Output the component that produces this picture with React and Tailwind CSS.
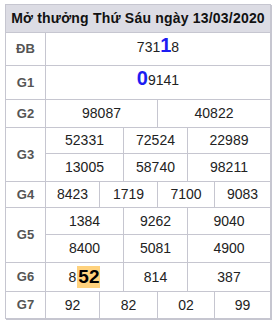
const cell = 'flex items-center justify-center border-r border-b border-[#c6c6d0] text-[14px] text-[#222]'
const label = 'flex items-center justify-center border-r border-b border-[#c6c6d0] text-[13px] font-bold text-[#555]'

function Big({ children }) {
  return <span className="text-[20px] font-bold text-[#1d1df2] leading-none">{children}</span>
}

function Row4({ name, values }) {
  return (
    <>
      <div className={label}>{name}</div>
      <div className={`${cell} col-span-1`}>{values[0]}</div>
      <div className={`${cell} col-span-2`}>{values[1]}</div>
      <div className={`${cell} col-span-2`}>{values[2]}</div>
      <div className={`${cell} col-span-1`}>{values[3]}</div>
    </>
  )
}

function Triple({ values }) {
  return values.map((v, i) => (
    <div key={i} className={`${cell} col-span-2`}>
      {v}
    </div>
  ))
}

export default function App() {
  return (
    <div className="pt-[4px] pl-[5px] bg-white min-h-screen" style={{ fontFamily: '"Liberation Sans", Arial, sans-serif' }}>
      <div className="grid w-fit grid-cols-[40px_54px_24px_34px_30px_27px_56px] grid-rows-[28px_33px_34px_28px_26px_28px_26px_27px_28px_29px_27px] border-l border-t border-[#c6c6d0] shadow-[1px_1px_0_#c6c6d0]">
        <div className="col-span-7 flex items-center justify-center border-r border-b border-[#c6c6d0] bg-[#dcdce4] text-[14px] font-bold text-[#111] tracking-[0.2px]">
          Mở thưởng Thứ Sáu ngày 13/03/2020
        </div>

        <div className={label}>ĐB</div>
        <div className={`${cell} col-span-6 items-end pb-[7px]`}>
          <span>
            731<Big>1</Big>8
          </span>
        </div>

        <div className={label}>G1</div>
        <div className={`${cell} col-span-6 items-end pb-[8px]`}>
          <span>
            <Big>0</Big>9141
          </span>
        </div>

        <div className={label}>G2</div>
        <div className={`${cell} col-span-3`}>98087</div>
        <div className={`${cell} col-span-3`}>40822</div>

        <div className={`${label} row-span-2`}>G3</div>
        <Triple values={['52331', '72524', '22989']} />
        <Triple values={['13005', '58740', '98211']} />

        <Row4 name="G4" values={['8423', '1719', '7100', '9083']} />

        <div className={`${label} row-span-2`}>G5</div>
        <Triple values={['1384', '9262', '9040']} />
        <Triple values={['8400', '5081', '4900']} />

        <div className={label}>G6</div>
        <div className={`${cell} col-span-2`}>
          <span className="flex items-center">
            8
            <span className="ml-[1px] inline-flex h-[22px] items-center bg-[#ffd27d] px-[1px] text-[19px] font-bold text-black">
              52
            </span>
          </span>
        </div>
        <div className={`${cell} col-span-2`}>814</div>
        <div className={`${cell} col-span-2`}>387</div>

        <Row4 name="G7" values={['92', '82', '02', '99']} />
      </div>
    </div>
  )
}
